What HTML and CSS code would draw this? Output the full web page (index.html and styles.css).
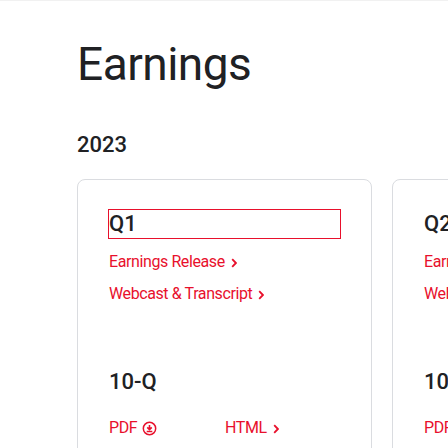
FILE: index.html
```html
<!DOCTYPE html>
<html lang="en">
<head>
<meta charset="utf-8">
<title>Earnings</title>
<link rel="stylesheet" href="styles.css">
</head>
<body>
<main class="page">
  <h1 class="title">Earnings</h1>
  <h2 class="year">2023</h2>
  <div class="cards">
    <section class="card">
      <h3 class="quarter focused">Q1</h3>
      <ul class="links">
        <li><a class="link" href="#">Earnings Release<svg class="chev" viewBox="0 0 6 10" width="6" height="10"><path d="M1.2 1.2L4.9 5L1.2 8.8" fill="none" stroke="currentColor" stroke-width="1.8"/></svg></a></li>
        <li><a class="link" href="#">Webcast &amp; Transcript<svg class="chev" viewBox="0 0 6 10" width="6" height="10"><path d="M1.2 1.2L4.9 5L1.2 8.8" fill="none" stroke="currentColor" stroke-width="1.8"/></svg></a></li>
      </ul>
      <h3 class="quarter filing">10-Q</h3>
      <div class="formats">
        <a class="link" href="#">PDF<svg class="dl" viewBox="0 0 16 16" width="15" height="15"><circle cx="8" cy="8" r="6.6" fill="none" stroke="currentColor" stroke-width="1.6"/><path d="M8 4.2v4.8M5.6 6.8L8 9.2l2.4-2.4" fill="none" stroke="currentColor" stroke-width="1.7"/><path d="M5 11.2h6" stroke="currentColor" stroke-width="1.6"/></svg></a>
        <a class="link" href="#">HTML<svg class="chev" viewBox="0 0 6 10" width="6" height="10"><path d="M1.2 1.2L4.9 5L1.2 8.8" fill="none" stroke="currentColor" stroke-width="1.8"/></svg></a>
      </div>
    </section>
    <section class="card">
      <h3 class="quarter">Q2</h3>
      <ul class="links">
        <li><a class="link" href="#">Earnings Release<svg class="chev" viewBox="0 0 6 10" width="6" height="10"><path d="M1.2 1.2L4.9 5L1.2 8.8" fill="none" stroke="currentColor" stroke-width="1.8"/></svg></a></li>
        <li><a class="link" href="#">Webcast &amp; Transcript<svg class="chev" viewBox="0 0 6 10" width="6" height="10"><path d="M1.2 1.2L4.9 5L1.2 8.8" fill="none" stroke="currentColor" stroke-width="1.8"/></svg></a></li>
      </ul>
      <h3 class="quarter filing">10-Q</h3>
      <div class="formats">
        <a class="link" href="#">PDF<svg class="dl" viewBox="0 0 16 16" width="15" height="15"><circle cx="8" cy="8" r="6.6" fill="none" stroke="currentColor" stroke-width="1.6"/><path d="M8 4.2v4.8M5.6 6.8L8 9.2l2.4-2.4" fill="none" stroke="currentColor" stroke-width="1.7"/><path d="M5 11.2h6" stroke="currentColor" stroke-width="1.6"/></svg></a>
        <a class="link" href="#">HTML<svg class="chev" viewBox="0 0 6 10" width="6" height="10"><path d="M1.2 1.2L4.9 5L1.2 8.8" fill="none" stroke="currentColor" stroke-width="1.8"/></svg></a>
      </div>
    </section>
  </div>
</main>
</body>
</html>
```
FILE: styles.css
```css
* { box-sizing: border-box; }
html, body { margin: 0; padding: 0; background: #fff; overflow: hidden; height: 448px; }
body {
  font-family: Roboto, "Open Sans", Arial, sans-serif;
  color: #202124;
  border-top: 1px solid #f1f1f1;
}
.page { padding-left: 77px; }
.title {
  margin: 35px 0 0;
  font-size: 46px;
  line-height: 56px;
  font-weight: 400;
  letter-spacing: -0.5px;
}
.year {
  margin: 39px 0 0;
  font-size: 22px;
  line-height: 28px;
  font-weight: 500;
}
.cards {
  display: flex;
  gap: 20px;
  margin-top: 20px;
}
.card {
  flex: 0 0 295px;
  height: 280px;
  border: 1px solid #dadce0;
  border-radius: 8px;
  padding: 30px 31px;
}
.quarter {
  margin: 0;
  font-size: 22px;
  line-height: 28px;
  font-weight: 500;
}
.focused { outline: 1px solid #e8102c; }
.links {
  list-style: none;
  margin: 8px 0 0;
  padding: 0;
}
.links li { line-height: 32px; height: 32px; }
.link {
  color: #e8102c;
  text-decoration: none;
  font-size: 16px;
  line-height: 32px;
  letter-spacing: -0.4px;
  display: inline-flex;
  align-items: center;
}
.chev { display: block; margin-left: 6px; margin-top: 1px; }
.filing { margin-top: 58px; }
.formats {
  display: grid;
  grid-template-columns: 116px auto;
  margin-top: 16px;
}
.dl { display: block; margin-left: 5px; }
```
